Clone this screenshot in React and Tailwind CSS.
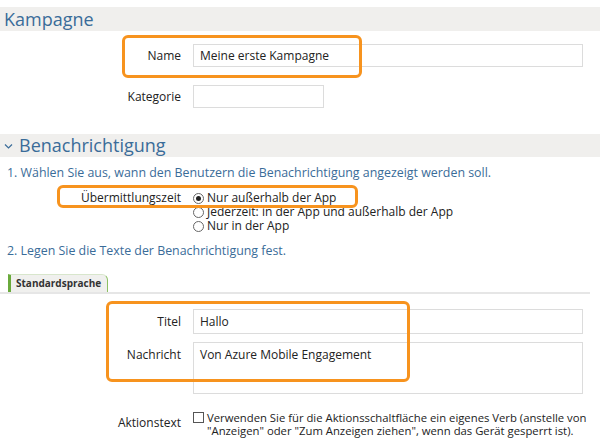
import React from "react";

const labelCls = "w-[181px] shrink-0 text-right text-[12px] text-[#222]";

export default function App() {
  return (
    <div className="relative w-[600px] h-[445px] overflow-hidden bg-white font-['Open_Sans','Noto_Sans',sans-serif] text-[#222]">
      <div className="h-[7px]" />
      <div className="h-[24px] bg-[#f0efed] pl-[4px] text-[18px] leading-[24px] text-[#3a6c99]">Kampagne</div>

      <div className="mt-[13px] flex items-center">
        <div className={labelCls}>Name</div>
        <div className="ml-[12px] flex h-[23px] w-[390px] items-center border border-[#dcdcdc] pl-[6px] text-[12px]">Meine erste Kampagne</div>
      </div>
      <div className="mt-[18px] flex items-center">
        <div className={labelCls}>Kategorie</div>
        <div className="ml-[12px] h-[23px] w-[131px] border border-[#dcdcdc]" />
      </div>

      <div className="mt-[26px] flex h-[23px] items-center bg-[#f0efed] text-[18px] text-[#3a6c99]">
        <svg width="19" height="23" viewBox="0 0 19 23" className="shrink-0">
          <polyline points="5,10.5 8.5,14 12,10.5" fill="none" stroke="#3a6c99" strokeWidth="1.2" />
        </svg>
        <span className="leading-[23px]">Benachrichtigung</span>
      </div>

      <div className="mt-[9px] pl-[7px] text-[12.4px] leading-[14px] text-[#3a6c99]">1. Wählen Sie aus, wann den Benutzern die Benachrichtigung angezeigt werden soll.</div>

      <div className="mt-[11px] flex items-start">
        <div className={labelCls + " leading-[14px]"}>Übermittlungszeit</div>
        <div className="ml-[12px] flex flex-col text-[12px] leading-[14px]">
          {[
            ["Nur außerhalb der App", true],
            ["Jederzeit: in der App und außerhalb der App", false],
            ["Nur in der App", false],
          ].map(([t, on]) => (
            <div key={t} className="flex items-center">
              <span className="mr-[3px] flex h-[11px] w-[11px] items-center justify-center rounded-full border border-[#666] bg-white">
                {on && <span className="h-[5px] w-[5px] rounded-full bg-[#222]" />}
              </span>
              <span>{t}</span>
            </div>
          ))}
        </div>
      </div>

      <div className="mt-[11px] pl-[7px] text-[12.4px] leading-[14px] text-[#3a6c99]">2. Legen Sie die Texte der Benachrichtigung fest.</div>

      <div className="mt-[16px] w-[590px] border-b-2 border-[#e6e6e6]">
        <div className="ml-[8px] flex h-[18px] w-[100px] items-center rounded-tr-[6px] border-l-[3px] border-r border-t border-l-[#6aaa3c] border-r-[#8cc063] border-t-[#d8e6cc] bg-[#f0f0ee] pl-[5px] text-[10px] font-bold text-[#333]">Standardsprache</div>
      </div>

      <div className="mt-[15px] flex items-center">
        <div className={labelCls}>Titel</div>
        <div className="ml-[12px] flex h-[25px] w-[390px] items-center border border-[#dcdcdc] pl-[6px] text-[12px]">Hallo</div>
      </div>
      <div className="mt-[8px] flex items-start">
        <div className={labelCls + " pt-[4px]"}>Nachricht</div>
        <div className="ml-[12px] h-[52px] w-[390px] border border-[#dcdcdc] pl-[6px] pt-[3px] text-[12px]">Von Azure Mobile Engagement</div>
      </div>

      <div className="mt-[17px] flex items-start">
        <div className={labelCls + " pt-[5px] leading-[14px]"}>Aktionstext</div>
        <div className="ml-[12px] flex items-start text-[11.3px] leading-[13px]">
          <span className="mr-[3px] mt-[1px] h-[11px] w-[11px] shrink-0 border border-[#555]" />
          <span className="w-[392px]">Verwenden Sie für die Aktionsschaltfläche ein eigenes Verb (anstelle von "Anzeigen" oder "Zum Anzeigen ziehen", wenn das Gerät gesperrt ist).</span>
        </div>
      </div>

      <div className="absolute left-[122px] top-[35px] h-[43px] w-[240px] rounded-[6px] border-[3px] border-[#f7931e]" />
      <div className="absolute left-[57px] top-[185px] h-[23px] w-[301px] rounded-[6px] border-[3px] border-[#f7931e]" />
      <div className="absolute left-[106px] top-[301px] h-[81px] w-[304px] rounded-[6px] border-[3px] border-[#f7931e]" />
    </div>
  );
}
